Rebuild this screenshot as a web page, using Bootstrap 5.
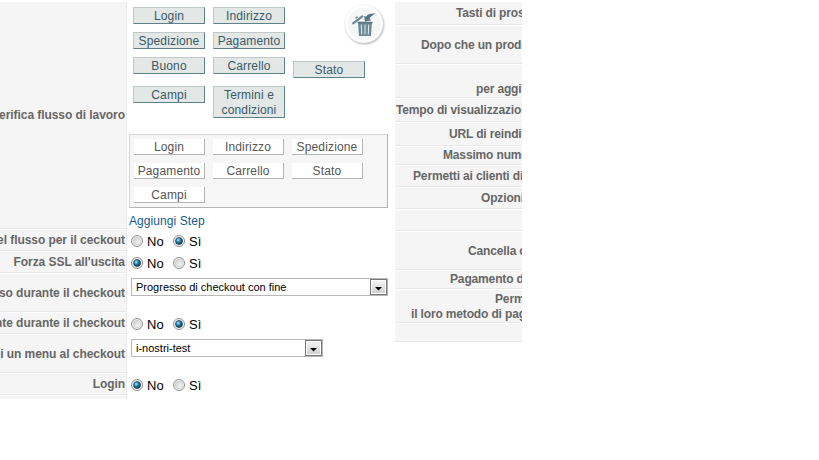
<!DOCTYPE html>
<html lang="it">
<head>
<meta charset="utf-8">
<title>Configurazione checkout</title>
<link href="https://cdn.jsdelivr.net/npm/bootstrap@5.3.0/dist/css/bootstrap.min.css" rel="stylesheet">
<style>
body{font-family:"Liberation Sans",Arial,sans-serif;font-size:12px;line-height:15px;color:#666;background:#fff;overflow:hidden}
.settings{width:395px;gap:1px;padding-top:2px}
.options{width:127px;gap:1px;padding-top:2px}
.setting{height:21px}
.setting.tall{height:38px}
.setting.flow{height:227px}
.setting.last{height:3px}
.key{width:127px;background:#f5f5f5;border-right:1px solid #e9e9e9;border-bottom:1px solid #e9e9e9;padding-right:1px}
.tall .key{padding-top:1px}
.last .key{border-bottom:0}
.value{width:268px}
.option{background:#f5f5f5;border-bottom:1px solid #e9e9e9}
.key,.option{font-weight:700;white-space:nowrap;overflow:hidden;letter-spacing:-.06px}
.option{letter-spacing:-.15px}
.steps{display:grid;grid-template-columns:repeat(3,72px);grid-template-rows:17px 17px 21px 32px;gap:8px;align-items:start;padding:5px 0 0 6px}
.step{border:1px solid;border-color:#c0c8c8 #5c8287 #5c8287 #c0c8c8;background:#e3e8e6;color:#3a5967;text-align:center;height:17px;padding-top:1px;letter-spacing:.15px}
.step.double{height:32px}
.low{margin-top:4px}
.dropzone{width:259px;height:74px;margin:16px 0 0 2px;background:#f6f6f6;border:1px solid;border-color:#d5d5d5 #b5b5b5 #b5b5b5 #d5d5d5;display:grid;grid-template-columns:repeat(3,71px);grid-auto-rows:16px;gap:8px;padding:4px}
.slot{background:#fff;border-right:1px solid #b5b5b5;border-bottom:1px solid #b5b5b5;text-align:center;color:#555;height:16px;padding-top:1px;letter-spacing:.15px}
.addstep{color:#135b8d;margin:6px 0 0 2px;letter-spacing:.08px}
.bin{width:44px;height:44px;left:215px;top:-1px}
.choices{padding-left:4px;color:#000;font-size:13px}
.choice{width:42px;gap:4px}
.choice svg{width:12px;height:12px;flex:none}
.choice span{padding-top:2px}
.picker{height:18px;margin:4px 0 0 4px;border:1px solid #b8b8b8;background:#fff;color:#000;font-size:11px;padding-left:4px;width:257px}
.picker.short{width:192px}
.arrow{width:17px;height:16px;border:1px solid #777;background:linear-gradient(#f5f5f5,#cfcfcf);box-shadow:inset 0 0 0 1px #fff}
.i1{padding-left:61px}.i2{padding-left:26px}.i3{padding-left:81px}.i4{padding-left:1px}.i5{padding-left:54px}.i6{padding-left:48px}.i7{padding-left:18px}.i8{padding-left:86px}.i9{padding-left:73px}.i10{padding-left:55px}.i11{padding-left:16px}
.h18{height:18px}.h21{height:21px}.h23{height:23px}.h33{height:33px}.h38{height:38px}
.h33,.h38{padding-top:1px}
.indent{padding-left:84px}
</style>
<script src="https://cdn.jsdelivr.net/npm/bootstrap@5.3.0/dist/js/bootstrap.bundle.min.js"></script>
</head>
<body>
<svg width="0" height="0" class="d-block" aria-hidden="true">
<defs>
<linearGradient id="ring" x2="1" y2="1"><stop stop-color="#d0d0d0"/><stop offset="1" stop-color="#fafafa"/></linearGradient>
<radialGradient id="dot" cx=".38" cy=".35" r=".7"><stop stop-color="#b5e6fa"/><stop offset=".45" stop-color="#2583ad"/><stop offset="1" stop-color="#0c2d45"/></radialGradient>
<symbol id="off" viewBox="0 0 12 12"><circle cx="6" cy="6" r="5.5" fill="#f5f5f5" stroke="#8e8f8f"/><circle cx="6" cy="6" r="3.8" fill="url(#ring)" stroke="#bdbdbd" stroke-width=".6"/></symbol>
<symbol id="on" viewBox="0 0 12 12"><circle cx="6" cy="6" r="5.5" fill="#f5f5f5" stroke="#8e8f8f"/><circle cx="6" cy="6" r="3.5" fill="url(#dot)" stroke="#173c54" stroke-width=".7"/></symbol>
</defs>
</svg>
<main class="d-flex align-items-start">
<section class="settings d-flex flex-column">
  <div class="setting flow d-flex">
    <div class="key d-flex align-items-center justify-content-end">Verifica flusso di lavoro</div>
    <div class="value position-relative">
      <div class="steps">
        <div class="step">Login</div><div class="step">Indirizzo</div><div></div>
        <div class="step">Spedizione</div><div class="step">Pagamento</div><div></div>
        <div class="step">Buono</div><div class="step">Carrello</div><div class="step low">Stato</div>
        <div class="step">Campi</div><div class="step double">Termini e condizioni</div>
      </div>
      <svg class="bin position-absolute" viewBox="0 0 44 44">
        <defs><radialGradient id="sh"><stop offset=".8" stop-color="#888"/><stop offset="1" stop-color="#999" stop-opacity="0"/></radialGradient></defs>
        <circle cx="22.700" cy="24" r="21" fill="url(#sh)" opacity=".75"/>
        <circle cx="22" cy="23" r="19" fill="#fff"/>
        <circle cx="22" cy="23" r="16.500" fill="#f5f7f7"/>
        <path d="M16 21h14l-1 14H17z" fill="#6c8994"/>
        <path d="M15.500 21.500h15" stroke="#557582" stroke-width="1.500"/>
        <path d="M19.300 23.500l.4 10M23 23.500v10M26.700 23.500l-.4 10" stroke="#dbe6e9" stroke-width="1.100"/>
        <path d="M10.500 22.800l10.500-8" stroke="#6c8994" stroke-width="2.200"/><path d="M13.500 17.300l2-1.400" stroke="#6c8994" stroke-width="1.500"/>
        <path d="M33.500 12.500c-5-.3-8 .8-9.500 3.200l-2-.8 1 5.500 6.500-1.200-2-1.200c.8-2.200 2.500-3.500 6-5.500z" fill="#557582"/>
      </svg>
      <div class="dropzone">
        <div class="slot">Login</div><div class="slot">Indirizzo</div><div class="slot">Spedizione</div>
        <div class="slot">Pagamento</div><div class="slot">Carrello</div><div class="slot">Stato</div>
        <div class="slot">Campi</div>
      </div>
      <div class="addstep">Aggiungi Step</div>
    </div>
  </div>
  <div class="setting d-flex">
    <div class="key d-flex align-items-center justify-content-end">del flusso per il ceckout</div>
    <div class="value choices d-flex align-items-center"><div class="choice d-flex align-items-center"><svg><use href="#off"/></svg><span>No</span></div><div class="choice d-flex align-items-center"><svg><use href="#on"/></svg><span>Sì</span></div></div>
  </div>
  <div class="setting d-flex">
    <div class="key d-flex align-items-center justify-content-end">Forza SSL all'uscita</div>
    <div class="value choices d-flex align-items-center"><div class="choice d-flex align-items-center"><svg><use href="#on"/></svg><span>No</span></div><div class="choice d-flex align-items-center"><svg><use href="#off"/></svg><span>Sì</span></div></div>
  </div>
  <div class="setting tall d-flex">
    <div class="key d-flex align-items-center justify-content-end">Progresso durante il checkout</div>
    <div class="value"><div class="picker d-flex align-items-center justify-content-between"><span>Progresso di checkout con fine</span><svg class="arrow" viewBox="0 0 15 14"><path d="M4 7h7L7.500 10.500z"/></svg></div></div>
  </div>
  <div class="setting d-flex">
    <div class="key d-flex align-items-center justify-content-end">Cliente durante il checkout</div>
    <div class="value choices d-flex align-items-center"><div class="choice d-flex align-items-center"><svg><use href="#off"/></svg><span>No</span></div><div class="choice d-flex align-items-center"><svg><use href="#on"/></svg><span>Sì</span></div></div>
  </div>
  <div class="setting tall d-flex">
    <div class="key d-flex align-items-center justify-content-end">di un menu al checkout</div>
    <div class="value"><div class="picker short d-flex align-items-center justify-content-between"><span>i-nostri-test</span><svg class="arrow" viewBox="0 0 15 14"><path d="M4 7h7L7.500 10.500z"/></svg></div></div>
  </div>
  <div class="setting d-flex">
    <div class="key d-flex align-items-center justify-content-end">Login</div>
    <div class="value choices d-flex align-items-center"><div class="choice d-flex align-items-center"><svg><use href="#on"/></svg><span>No</span></div><div class="choice d-flex align-items-center"><svg><use href="#off"/></svg><span>Sì</span></div></div>
  </div>
  <div class="setting last d-flex"><div class="key"></div></div>
</section>
<section class="options d-flex flex-column">
  <div class="option h23 i1 d-flex align-items-center">Tasti di prosegui</div>
  <div class="option h38 i2 d-flex align-items-center">Dopo che un prodotto</div>
  <div class="option h33 i3 d-flex align-items-center"><div>&nbsp;<br>per aggiungere</div></div>
  <div class="option h23 i4 d-flex align-items-center">Tempo di visualizzazione</div>
  <div class="option h23 i5 d-flex align-items-center">URL di reindirizzamento</div>
  <div class="option h18 i6 d-flex align-items-center">Massimo numero</div>
  <div class="option h21 i7 d-flex align-items-center">Permetti ai clienti di</div>
  <div class="option h21 i8 d-flex align-items-center">Opzioni</div>
  <div class="option h21"></div>
  <div class="option h38 i9 d-flex align-items-center">Cancella carrello</div>
  <div class="option h18 i10 d-flex align-items-center">Pagamento di</div>
  <div class="option h33 i11 d-flex align-items-center"><div><div class="indent">Permetti</div>il loro metodo di pagamento</div></div>
  <div class="option h18"></div>
</section>
</main>
</body>
</html>
